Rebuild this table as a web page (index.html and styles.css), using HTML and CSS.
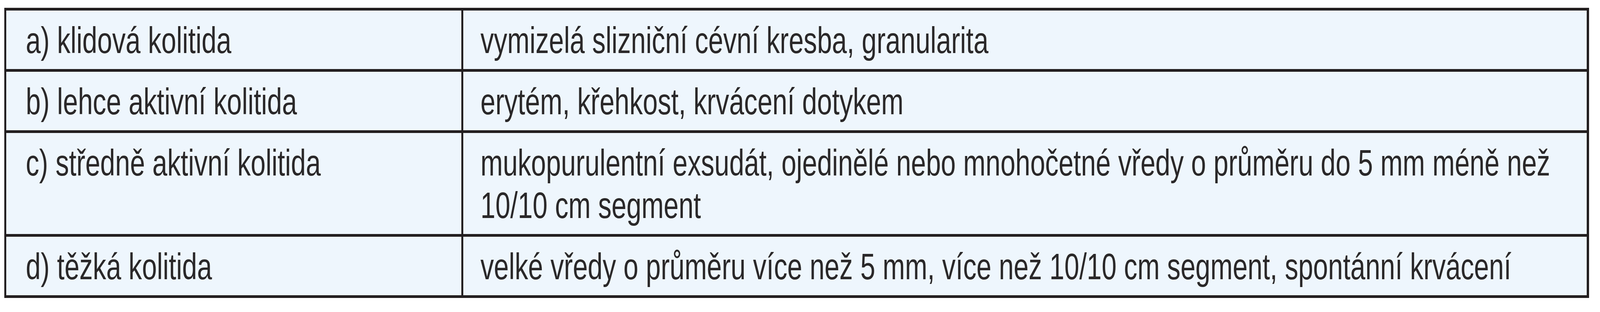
FILE: index.html
```html
<!DOCTYPE html>
<html lang="cs">
<head>
<meta charset="utf-8">
<title>Klasifikace kolitidy</title>
<link rel="stylesheet" href="styles.css">
</head>
<body>
<div class="grade-table" role="table">
  <div class="cell cell-label" role="cell"><span class="txt">a) klidová kolitida</span></div>
  <div class="cell cell-desc" role="cell"><span class="txt">vymizelá slizniční cévní kresba, granularita</span></div>
  <div class="cell cell-label" role="cell"><span class="txt">b) lehce aktivní kolitida</span></div>
  <div class="cell cell-desc" role="cell"><span class="txt">erytém, křehkost, krvácení dotykem</span></div>
  <div class="cell cell-label" role="cell"><span class="txt">c) středně aktivní kolitida</span></div>
  <div class="cell cell-desc" role="cell"><span class="txt">mukopurulentní exsudát, ojedinělé nebo mnohočetné vředy o průměru do 5 mm méně než 10/10 cm segment</span></div>
  <div class="cell cell-label" role="cell"><span class="txt">d) těžká kolitida</span></div>
  <div class="cell cell-desc" role="cell"><span class="txt">velké vředy o průměru více než 5 mm, více než 10/10 cm segment, spontánní krvácení</span></div>
</div>
</body>
</html>
```

FILE: styles.css
```css
:root {
  /* horizontal squeeze of the glyphs (the reference uses a condensed face) */
  --sx: 0.879;
}

html, body {
  margin: 0;
  padding: 0;
  background: #ffffff;
}

/* widths follow the viewport (designed for 4985px), heights are fixed */
.grade-table {
  display: grid;
  grid-template-columns: 1417fr 3501fr;
  column-gap: 0.1204vw;
  row-gap: 7px;
  padding: 7px 0.1404vw;
  width: 99.057vw;
  box-sizing: border-box;
  margin: 20px 0 0 0.2608vw;
  background: #231f20;
  font-family: "Liberation Sans", Arial, sans-serif;
  font-size: 95px;
  line-height: 109px;
  color: #2a2829;
}

.cell {
  background: #eef6fd;
  padding-top: 22px;
  padding-bottom: 19px;
  overflow: hidden;
  min-width: 0;
}

.cell-label {
  padding-left: 1.2036vw;
  padding-right: 0.8vw;
}

.cell-desc {
  padding-left: 1.0832vw;
  padding-right: 1.0832vw;
}

.txt {
  display: block;
  width: calc(100% / var(--sx));
  transform: scaleX(var(--sx));
  transform-origin: 0 0;
}

@media (max-width: 4700px) {
  :root { --sx: 0.7222; }
}
```
